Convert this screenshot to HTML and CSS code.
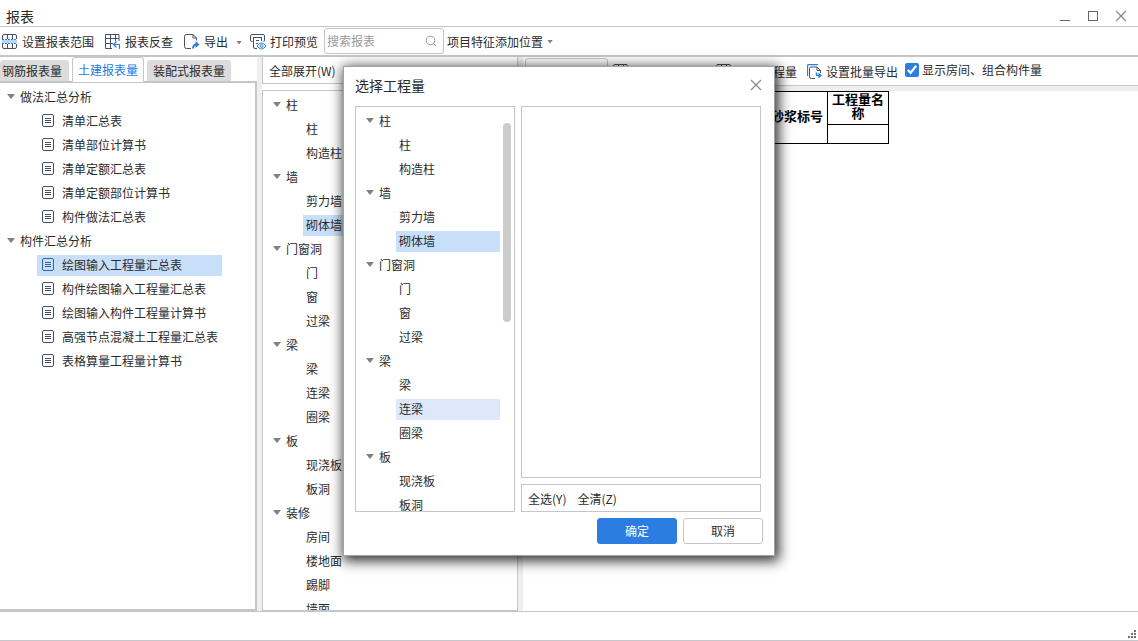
FILE: index.html
```html
<!DOCTYPE html>
<html lang="zh-CN">
<head>
<meta charset="utf-8">
<title>报表</title>
<link rel="stylesheet" href="styles.css">
</head>
<body>
<svg class="defs" aria-hidden="true">
  <symbol id="doc" viewBox="0 0 12 13"><rect x=".5" y=".5" width="11" height="12" rx="1.5" fill="none" stroke="currentColor"/><path d="M3 4.500h6M3 6.500h6M3 8.500h6" stroke="currentColor" fill="none"/></symbol>
  <symbol id="close" viewBox="0 0 12 12"><path d="M1 1l10 10M11 1L1 11" stroke="#888" stroke-width="1.200" fill="none"/></symbol>
  <symbol id="grid" viewBox="0 0 15 15"><path d="M.5 14V2q0-1.500 1.500-1.500h11q1.500 0 1.500 1.500v12M.5 5.500h14M5.500 1v13M10.500 1v13" fill="none" stroke="#4a5064"/></symbol>
</svg>

<div class="window">
  <header class="titlebar">
    <h1 class="title">报表</h1>
    <div class="window-buttons">
      <button class="icon-button" aria-label="最小化"><svg width="12" height="12"><path d="M1 10.500h10" stroke="#666"/></svg></button>
      <button class="icon-button" aria-label="最大化"><svg width="12" height="12"><rect x="1.500" y="1.500" width="9" height="9" fill="none" stroke="#666"/></svg></button>
      <button class="icon-button" aria-label="关闭"><svg width="12" height="12"><use href="#close"/></svg></button>
    </div>
  </header>

  <nav class="toolbar">
    <button class="tool"><svg width="16" height="15" viewBox="0 0 16 15"><path d="M.5 5V2q0-1.500 1.500-1.500h11q1.500 0 1.500 1.500v3M.5 10v3q0 1.500 1.500 1.500h11q1.500 0 1.500-1.500v-3M5.500 1v4M10.500 1v4M5.500 10v4M10.500 10v4" fill="none" stroke="#4a5064"/><path d="M0 5.500h15M0 9.500h15" stroke="#2a7ee6" stroke-dasharray="2 1"/><path d="M0 7.500h15" stroke="#b9d6f8" stroke-width="3"/></svg>设置报表范围</button>
    <button class="tool"><svg width="16" height="15" viewBox="0 0 16 15"><path d="M7 14.500H.5V.5h13.500V7M.5 4.500H14M.5 9.500H8M5.500 1v13M10.500 1v6" fill="none" stroke="#4a5064"/><path d="M11.500 7.500L8.500 10.500l3 3M9 10.500h5.500V15" fill="none" stroke="#2a7ee6" stroke-width="1.200"/></svg>报表反查</button>
    <button class="tool"><svg width="16" height="15" viewBox="0 0 16 15"><path d="M7 14.500H2.500Q.5 14.500.5 12.500v-10Q.5.500 2.500.500H9L12.500 4v2.500M9 .5V4h3.500" fill="none" stroke="#4a5064"/><path d="M9 14.500c0-3 1-4 4-4" fill="none" stroke="#2a7ee6" stroke-width="1.800"/><path d="M11.500 7l4 3.500-4 3.500z" fill="#2a7ee6"/></svg>导出</button>
    <button class="tool-arrow" aria-label="导出选项"><span class="caret caret-small"></span></button>
    <button class="tool"><svg width="16" height="16" viewBox="0 0 16 16"><path d="M2.500 7.500H2Q.5 7.500.5 6V2Q.5.500 2 .500h11q1.500 0 1.500 1.500v4q0 1.500-1 1.500M3 3.500h9M3.500 4v9q0 1.500 1.500 1.500h2M11.500 4v3M6 6.500h3M6 9.500h2" fill="none" stroke="#4a5064"/><path d="M7 12q4.500-6 9 0q-4.500 6-9 0z" fill="#fff" stroke="#2a7ee6"/><circle cx="11.500" cy="12" r="1.500" fill="none" stroke="#2a7ee6"/></svg>打印预览</button>
    <label class="search">
      <input type="text" placeholder="搜索报表" aria-label="搜索报表">
      <svg width="12" height="12"><circle cx="5.500" cy="5.500" r="4.300" fill="none" stroke="#999"/><path d="M8.500 8.500l2.500 2.500" stroke="#999"/></svg>
    </label>
    <button class="tool tool-menu">项目特征添加位置<span class="caret caret-small"></span></button>
  </nav>

  <main class="main">
    <section class="reports">
      <div class="tabs">
        <button class="tab tab-first">钢筋报表量</button>
        <button class="tab tab-active">土建报表量</button>
        <button class="tab">装配式报表量</button>
      </div>
      <div class="tree report-tree">
        <div class="branch"><span class="caret"></span>做法汇总分析</div>
        <div class="leaf"><svg class="doc"><use href="#doc"/></svg>清单汇总表</div>
        <div class="leaf"><svg class="doc"><use href="#doc"/></svg>清单部位计算书</div>
        <div class="leaf"><svg class="doc"><use href="#doc"/></svg>清单定额汇总表</div>
        <div class="leaf"><svg class="doc"><use href="#doc"/></svg>清单定额部位计算书</div>
        <div class="leaf"><svg class="doc"><use href="#doc"/></svg>构件做法汇总表</div>
        <div class="branch"><span class="caret"></span>构件汇总分析</div>
        <div class="leaf selected"><svg class="doc"><use href="#doc"/></svg>绘图输入工程量汇总表</div>
        <div class="leaf"><svg class="doc"><use href="#doc"/></svg>构件绘图输入工程量汇总表</div>
        <div class="leaf"><svg class="doc"><use href="#doc"/></svg>绘图输入构件工程量计算书</div>
        <div class="leaf"><svg class="doc"><use href="#doc"/></svg>高强节点混凝土工程量汇总表</div>
        <div class="leaf"><svg class="doc"><use href="#doc"/></svg>表格算量工程量计算书</div>
      </div>
    </section>

    <section class="components">
      <div class="component-bar"><button class="text-button">全部展开(W)</button></div>
      <div class="tree component-tree">
        <div class="branch"><span class="caret"></span>柱</div>
        <div class="leaf">柱</div>
        <div class="leaf">构造柱</div>
        <div class="branch"><span class="caret"></span>墙</div>
        <div class="leaf">剪力墙</div>
        <div class="leaf selected">砌体墙</div>
        <div class="branch"><span class="caret"></span>门窗洞</div>
        <div class="leaf">门</div>
        <div class="leaf">窗</div>
        <div class="leaf">过梁</div>
        <div class="branch"><span class="caret"></span>梁</div>
        <div class="leaf">梁</div>
        <div class="leaf">连梁</div>
        <div class="leaf">圈梁</div>
        <div class="branch"><span class="caret"></span>板</div>
        <div class="leaf">现浇板</div>
        <div class="leaf">板洞</div>
        <div class="branch"><span class="caret"></span>装修</div>
        <div class="leaf">房间</div>
        <div class="leaf">楼地面</div>
        <div class="leaf">踢脚</div>
        <div class="leaf">墙面</div>
      </div>
    </section>

    <section class="report">
      <div class="report-bar">
        <select class="report-select" aria-label="分类"><option></option></select>
        <button class="tool report-tool" aria-label="设置"><svg width="15" height="15"><use href="#grid"/></svg></button>
        <button class="tool quantity-tool"><svg width="15" height="15"><use href="#grid"/></svg>程量</button>
        <button class="tool"><svg width="15" height="15" viewBox="0 0 15 15"><path d="M.5 12V2Q.5.500 2 .500h9" fill="none" stroke="#2a7ee6" stroke-width="1.300"/><path d="M8 14.500H4.500Q2.500 14.500 2.500 13V4.500q0-1.500 1.500-1.500h6L13.500 6.500V9M10 3v3.500h3.500" fill="none" stroke="#4a5064"/><path d="M9.500 8.500v2q0 1 1 1H13" fill="none" stroke="#2a7ee6" stroke-width="1.600"/><path d="M11.500 8.500l3.500 3-3.500 3z" fill="#2a7ee6"/></svg>设置批量导出</button>
        <label class="check"><input type="checkbox" checked>显示房间、组合构件量</label>
      </div>
      <table class="sheet">
        <tr><th class="sheet-grade" rowspan="2">砂浆标号</th><th class="sheet-name">工程量名称</th></tr>
        <tr><td class="sheet-value"></td></tr>
      </table>
    </section>
  </main>

  <footer class="statusbar">
    <svg width="8" height="8"><path d="M6 0h2v2H6zM3 3h2v2H3zM6 3h2v2H6zM0 6h2v2H0zM3 6h2v2H3zM6 6h2v2H6z" fill="#6f7378"/></svg>
  </footer>
</div>

<div class="dialog" role="dialog" aria-labelledby="dialog-title">
  <div class="dialog-head">
    <h2 class="title" id="dialog-title">选择工程量</h2>
    <button class="icon-button" aria-label="关闭"><svg width="12" height="12"><use href="#close"/></svg></button>
  </div>
  <div class="dialog-body">
    <div class="box picker">
      <div class="tree picker-tree">
        <div class="branch"><span class="caret"></span>柱</div>
        <div class="leaf">柱</div>
        <div class="leaf">构造柱</div>
        <div class="branch"><span class="caret"></span>墙</div>
        <div class="leaf">剪力墙</div>
        <div class="leaf selected">砌体墙</div>
        <div class="branch"><span class="caret"></span>门窗洞</div>
        <div class="leaf">门</div>
        <div class="leaf">窗</div>
        <div class="leaf">过梁</div>
        <div class="branch"><span class="caret"></span>梁</div>
        <div class="leaf">梁</div>
        <div class="leaf hovered">连梁</div>
        <div class="leaf">圈梁</div>
        <div class="branch"><span class="caret"></span>板</div>
        <div class="leaf">现浇板</div>
        <div class="leaf">板洞</div>
      </div>
      <div class="scrollbar"><div class="scroll-thumb"></div></div>
    </div>
    <div class="options">
      <div class="box option-list"></div>
      <div class="box option-actions">
        <button class="text-button">全选(Y)</button>
        <button class="text-button">全清(Z)</button>
      </div>
    </div>
  </div>
  <div class="dialog-foot">
    <button class="button button-primary">确定</button>
    <button class="button">取消</button>
  </div>
</div>
</body>
</html>
```
FILE: styles.css
```css
* { box-sizing: border-box; }

body {
  margin: 0;
  background: #fff;
  color: #2b2b2b;
  font: 12px/20px "Noto Sans CJK SC", "Noto Sans", sans-serif;
}

button, input, select { font: inherit; color: inherit; }

button {
  padding: 0;
  border: 0;
  background: none;
  white-space: nowrap;
}

svg { display: block; flex: none; }

.defs { position: absolute; width: 0; height: 0; }

.window {
  display: flex;
  flex-direction: column;
  height: 100vh;
  overflow: hidden;
}

.title { margin: 0; font-size: 14px; font-weight: 400; line-height: 20px; }

/* Title bar */
.titlebar {
  display: flex;
  justify-content: space-between;
  align-items: flex-end;
  height: 27px;
  padding: 0 11px 0 6px;
  border-bottom: 1px solid #c6c6c6;
}
.window-buttons { display: flex; gap: 16px; padding-bottom: 4px; }
.icon-button { width: 12px; height: 12px; }

/* Toolbar */
.toolbar {
  display: flex;
  align-items: center;
  height: 30px;
  padding-left: 2px;
  border-bottom: 2px solid #c3c7cc;
}
.tool { display: flex; align-items: center; gap: 4px; }
.toolbar .tool { padding-top: 1px; }
.toolbar .tool + .tool { margin-left: 11px; }
.tool-arrow { padding: 3px 8px 0; }
.caret {
  flex: none;
  width: 8px;
  height: 5px;
  background: #808080;
  clip-path: polygon(0 0, 100% 0, 50% 100%);
}
.caret-small { display: block; width: 6px; height: 4px; }
.search {
  display: flex;
  align-items: center;
  width: 120px;
  height: 26px;
  margin-left: 6px;
  padding: 0 6px 0 2px;
  border: 1px solid #c6c6c6;
  border-radius: 3px;
}
.search input {
  flex: 1;
  min-width: 0;
  padding: 0;
  border: 0;
  outline: 0;
  background: none;
}
.search input::placeholder { color: #999; }
.tool-menu { margin-left: 3px; }

/* Panels */
.main {
  flex: 1;
  display: flex;
  min-height: 0;
  gap: 5px;
  background: #efefef;
}
.reports {
  display: flex;
  flex-direction: column;
  flex: none;
  width: 257px;
  background: #fff;
}
.tabs {
  display: flex;
  align-items: flex-end;
  gap: 3px;
  height: 26px;
  border-bottom: 2px solid #c3c7cc;
}
.tab {
  height: 21px;
  padding: 0 6px;
  border-radius: 3px 3px 0 0;
  background: #dcdcdc;
}
.tab-first { padding: 0 7px 0 2px; }
.tab-active {
  height: 25px;
  margin-bottom: -1px;
  padding: 0 5px;
  border: 1px solid #c3c7cc;
  border-bottom: 0;
  background: #fff;
  color: #1f7ae0;
}

/* Trees */
.tree {
  display: flex;
  flex-direction: column;
  flex: 1;
  gap: 3px;
  min-height: 0;
  overflow: hidden;
}
.branch, .leaf {
  display: flex;
  flex: none;
  align-items: center;
  height: 21px;
  padding-bottom: 2px;
  white-space: nowrap;
}
.branch { gap: 5px; }
.leaf { padding-left: 3px; }
.selected { background: #c8dff9; }
.hovered { background: #dde9fa; }
.report-tree {
  padding: 4px 33px 0 7px;
  border: solid #c3c7cc;
  border-width: 0 2px 2px 0;
}
.report-tree .leaf {
  gap: 8px;
  margin-left: 30px;
  padding-left: 5px;
}
.doc { width: 12px; height: 13px; color: #4a5064; }
.selected .doc { color: #35639f; }

.components {
  display: flex;
  flex-direction: column;
  flex: none;
  gap: 6px;
  width: 256px;
  background: #fff;
}
.component-bar {
  display: flex;
  align-items: center;
  height: 27px;
  padding: 2px 0 0 6px;
  border: 1px solid #c6c6c6;
  border-top: 0;
}
.component-tree {
  padding: 4px 18px 0 10px;
  border: 1px solid #c6c6c6;
}
.component-tree .leaf { margin-left: 30px; }

/* Report sheet */
.report { flex: 1; min-width: 0; background: #fff; }
.report-bar {
  display: flex;
  align-items: center;
  height: 34px;
  padding-left: 2px;
  border-bottom: 5px solid #efefef;
  box-shadow: inset 0 -1px #c6c6c6;
}
.report-select {
  width: 83px;
  height: 28px;
  margin-right: 5px;
  border: 1px solid #c6c6c6;
  border-radius: 3px;
  background: #fff;
}
.report-tool { width: 103px; }
.quantity-tool { justify-content: space-between; width: 81px; margin-right: 10px; }
.check {
  display: flex;
  align-items: center;
  gap: 3px;
  margin-left: 7px;
  padding-bottom: 3px;
  white-space: nowrap;
}
.check input {
  width: 14px;
  height: 14px;
  margin: 0;
  accent-color: #2b7de1;
}
.sheet {
  width: 366px;
  border-collapse: collapse;
  color: #000;
  font-size: 13px;
  line-height: 14px;
}
.sheet th, .sheet td { border: 1px solid #000; }
.sheet .sheet-grade { padding: 0 4px 4px 0; text-align: right; }
.sheet .sheet-name { width: 61px; height: 32px; padding: 0 4px 4px; }
.sheet .sheet-value { height: 19px; padding: 0; }

/* Status bar */
.statusbar {
  display: flex;
  justify-content: flex-end;
  align-items: flex-end;
  height: 30px;
  padding: 0 2px 2px 0;
  border: solid #c3c7cc;
  border-width: 1px 0;
}

/* Dialog floats above the window */
.dialog {
  position: absolute;
  top: 66px;
  left: 343px;
  display: flex;
  flex-direction: column;
  width: 432px;
  height: 490px;
  padding: 0 11px 11px;
  border: 1px solid #a2a2a2;
  background: #fff;
  box-shadow: 2px 3px 12px 2px rgba(0, 0, 0, 0.8);
}
.dialog-head {
  display: flex;
  justify-content: space-between;
  align-items: center;
  height: 39px;
  padding: 0 1px 3px 0;
}
.dialog-body { flex: 1; display: flex; gap: 6px; min-height: 0; padding-right: 2px; }
.box { border: 1px solid #c6c6c6; }
.picker { display: flex; flex: none; width: 160px; }
.picker-tree { padding: 4px 3px 0 10px; }
.picker-tree .leaf { margin-left: 30px; }
.scrollbar { width: 11px; padding: 16px 3px 0 0; }
.scroll-thumb { height: 199px; border-radius: 4px; background: #cbcbcb; }
.options { display: flex; flex: 1; flex-direction: column; gap: 6px; min-width: 0; }
.option-list { flex: 1; }
.option-actions {
  display: flex;
  align-items: center;
  gap: 11px;
  height: 28px;
  padding: 2px 0 0 6px;
}
.dialog-foot { display: flex; justify-content: flex-end; gap: 6px; padding-top: 6px; }
.button {
  width: 80px;
  height: 26px;
  border: 1px solid #c6c6c6;
  border-radius: 3px;
}
.button-primary { border-color: #2b7de1; background: #2b7de1; color: #fff; }
```
